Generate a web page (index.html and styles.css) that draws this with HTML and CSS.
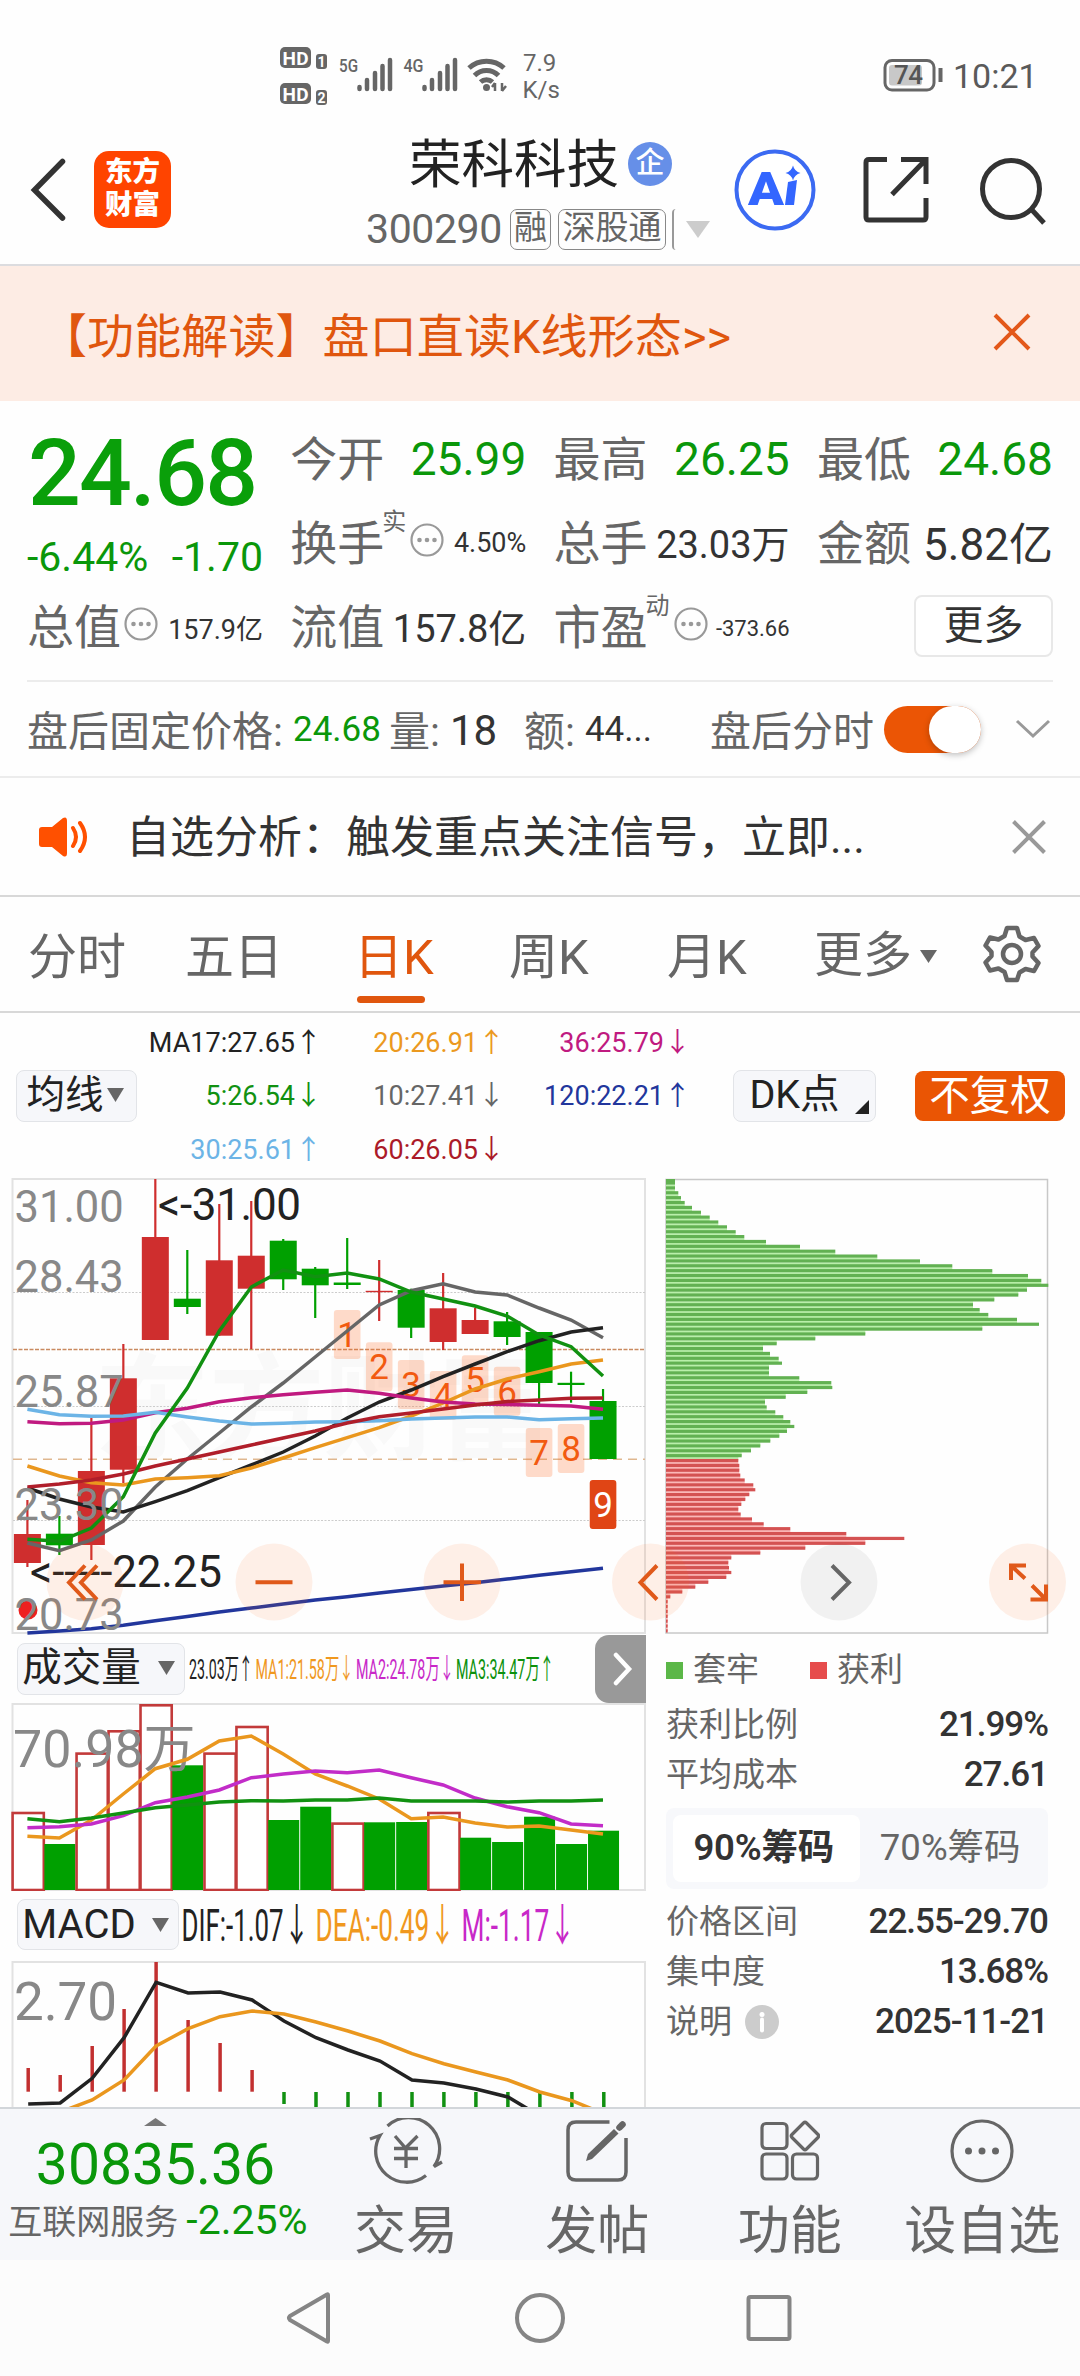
FILE: index.html
```html
<!DOCTYPE html>
<html lang="zh-CN">
<head>
<meta charset="utf-8">
<title>荣科科技 300290</title>
<link rel="stylesheet" href="styles.css">
</head>
<body>
<div class="status">
  <svg width="1080" height="120" viewBox="0 0 1080 120">
    <g fill="#666">
      <rect x="280" y="47" width="31" height="21" rx="5"/><rect x="316" y="54" width="11" height="15" rx="3"/>
      <rect x="280" y="83" width="31" height="21" rx="5"/><rect x="316" y="90" width="11" height="15" rx="3"/>
    </g>
    <g fill="#fff" font-weight="700" font-size="19"><text x="282.500" y="64.500" textLength="26">HD</text><text x="282.500" y="100.500" textLength="26">HD</text></g>
    <g fill="#fff" font-weight="700" font-size="14"><text x="317.500" y="66.500">1</text><text x="317.500" y="102.500">2</text></g>
    <g fill="#666" font-weight="500" font-size="18"><text x="339" y="72" textLength="19" lengthAdjust="spacingAndGlyphs">5G</text><text x="403.500" y="72" textLength="20" lengthAdjust="spacingAndGlyphs">4G</text></g>
    <g stroke="#666" stroke-width="4.500" stroke-linecap="round">
      <path d="M359.500 87v2M367 80v9M375 73v16M382.500 66v23M390 60v29"/>
      <path d="M424.500 87v2M432 80v9M440 73v16M447.500 66v23M455 60v29"/>
    </g>
    <g fill="none" stroke="#666" stroke-width="5">
      <path d="M469 68a26 26 0 0 1 35 0M474.500 75.500a17 17 0 0 1 24 0M480.500 82a9 9 0 0 1 12 0"/>
    </g>
    <circle cx="486.500" cy="87.500" r="3.500" fill="#666"/>
    <path d="M495 91v-8M495 83l-3 4M502 83v8M502 91l4-5" stroke="#666" stroke-width="2.500" fill="none"/>
    <g fill="#666" font-size="24"><text x="523" y="70.500">7.9</text><text x="522.500" y="97.500">K/s</text></g>
    <rect x="885" y="60.500" width="49" height="29.500" rx="7" fill="none" stroke="#666" stroke-width="3"/>
    <rect x="889" y="65" width="33" height="20.500" rx="3" fill="#c8c8c8"/>
    <path d="M940.500 68v14" stroke="#666" stroke-width="4"/>
    <text x="894" y="84" font-size="26" fill="#555" textLength="29" font-weight="500">74</text>
    <text x="953" y="88" font-size="34" fill="#5a5a5a">10:21</text>
  </svg>
</div>

<header class="top">
  <svg class="back" width="40" height="70" viewBox="0 0 40 70"><path d="M34.500 6.500L6.500 35l28 28" fill="none" stroke="#333" stroke-width="5.500" stroke-linecap="round"/></svg>
  <div class="logo"><span>东方</span><span>财富</span></div>
  <div class="stock">
    <div class="name">荣科科技<i>企</i></div>
    <div class="code"><span>300290</span><b>融</b><b class="wide">深股通</b><em></em><svg width="24" height="17" viewBox="0 0 24 17"><path d="M0 0h24L12 17z" fill="#ccc"/></svg></div>
  </div>
  <svg class="ai" width="84" height="84" viewBox="0 0 84 84">
    <circle cx="42" cy="42" r="38.500" fill="#fff" stroke="#3b6af2" stroke-width="4"/>
    <text x="15" y="56.500" font-size="47" font-weight="900" fill="#3366ff" textLength="36" lengthAdjust="spacingAndGlyphs">A</text>
    <path d="M55 34l9-2-3 25h-9z" fill="#3366ff"/>
    <path d="M60 17.500q1.500 6 7.500 7.500-6 1.500-7.500 7.500-1.500-6-7.500-7.500 6-1.500 7.500-7.500z" fill="#3366ff"/>
  </svg>
  <svg class="share" width="66" height="68" viewBox="0 0 66 68" fill="none" stroke="#333" stroke-width="5"><path d="M24 3.500H6q-3 0-3 3v54.500q0 3 3 3h54q3 0 3-3V42M38 3.500h25V28M62 4.500L29 38.500"/></svg>
  <svg class="search" width="70" height="70" viewBox="0 0 70 70" fill="none" stroke="#333" stroke-width="5"><circle cx="32" cy="33" r="28.500"/><path d="M53 54l12 13"/></svg>
</header>

<div class="banner"><span>【功能解读】盘口直读K线形态&gt;&gt;</span><svg width="38" height="38" viewBox="0 0 38 38"><path d="M2 2l34 34M36 2L2 36" stroke="#e3581a" stroke-width="4"/></svg></div>

<section class="quote">
  <div class="price"><strong>24.68</strong><p><span>-6.44%</span><span>-1.70</span></p></div>
  <div class="cell"><label>今开</label><span class="v green">25.99</span></div>
  <div class="cell"><label>最高</label><span class="v green">26.25</span></div>
  <div class="cell"><label>最低</label><span class="v green">24.68</span></div>
  <div class="cell"><label>换手<sup>实</sup></label><svg class="dots" viewBox="0 0 34 34"><use href="#dots"/></svg><span class="v s27">4.50%</span></div>
  <div class="cell"><label>总手</label><span class="v s38">23.03万</span></div>
  <div class="cell"><label>金额</label><span class="v s44">5.82亿</span></div>
  <div class="cell"><label>总值</label><svg class="dots" viewBox="0 0 34 34"><use href="#dots"/></svg><span class="v s27">157.9亿</span></div>
  <div class="cell"><label>流值</label><span class="v s38">157.8亿</span></div>
  <div class="cell"><label>市盈<sup>动</sup></label><svg class="dots" viewBox="0 0 34 34"><use href="#dots"/></svg><span class="v s22">-373.66</span></div>
  <div class="cell end"><button class="more">更多</button></div>
</section>
<svg class="defs" width="0" height="0"><defs><g id="dots"><circle cx="17" cy="17" r="15.500" fill="none" stroke="#999" stroke-width="2.200"/><g fill="#999"><circle cx="9.500" cy="17" r="2.300"/><circle cx="17" cy="17" r="2.300"/><circle cx="24.500" cy="17" r="2.300"/></g></g></defs></svg>

<section class="after">
  <span class="lab fixed">盘后固定价格:</span><span class="num green">24.68</span>
  <span class="lab vol">量:</span><span class="num big">18</span>
  <span class="lab amt">额:</span><span class="num">44...</span>
  <span class="lab time">盘后分时</span><span class="toggle"><i></i></span>
  <svg width="36" height="20" viewBox="0 0 36 20"><path d="M2 2l16 15L34 2" fill="none" stroke="#999" stroke-width="3"/></svg>
</section>

<section class="notice">
  <svg width="52" height="42" viewBox="0 0 52 42"><path d="M4 11h10L25 2q4-2 4 3v32q0 5-4 3l-11-9H4q-3 0-3-3V14q0-3 3-3z" fill="#ff5000"/><path d="M35 12q6 9 0 18M42 7q10 14 0 28" fill="none" stroke="#ff5000" stroke-width="4" stroke-linecap="round"/></svg>
  <p>自选分析：触发重点关注信号，立即...</p>
  <svg width="34" height="34" viewBox="0 0 34 34"><path d="M1.500 1.500l31 31M32.500 1.500l-31 31" stroke="#999" stroke-width="4"/></svg>
</section>

<nav class="tabs">
  <span>分时</span><span>五日</span><span class="on">日K</span><span>周K</span><span>月K</span><span>更多<svg width="17" height="13" viewBox="0 0 17 13"><path d="M0 0h17L8.500 13z" fill="#666"/></svg></span>
  <svg class="gear" width="58" height="58" viewBox="0 0 58 58" fill="none" stroke="#666" stroke-width="4.500" stroke-linejoin="round"><path d="M24 3h10l2.500 8.500 6 3.500 8.500-2 4.500 8-6 6.500v4l6 6.500-4.500 8-8.500-2-6 3.500L34 55H24l-2.500-8-6-3.500-8.500 2-4.500-8 6-6.500v-4l-6-6.500 4.500-8 8.500 2 6-3.500z"/><circle cx="29" cy="29" r="9"/></svg>
</nav>

<section class="legend">
  <button class="chip avg">均线<svg width="17" height="14" viewBox="0 0 17 14"><path d="M0 0h17L8.500 14z" fill="#666"/></svg></button>
  <div class="mas">
    <span class="c17">MA17:27.65↑</span><span class="c20">20:26.91↑</span><span class="c36">36:25.79↓</span>
    <span class="c5">5:26.54↓</span><span class="c10">10:27.41↓</span><span class="c120">120:22.21↑</span>
    <span class="c30">30:25.61↑</span><span class="c60">60:26.05↓</span>
  </div>
  <button class="chip dk">DK点<svg width="14" height="14" viewBox="0 0 14 14"><path d="M14 0v14H0z" fill="#222"/></svg></button>
  <button class="adj">不复权</button>
</section>

<main class="charts">
  <div class="left">
    <svg class="k" width="657" height="456" viewBox="0 1178 657 456">
      <text x="94" y="1450" font-size="116" font-weight="700" fill="#f9f9f9" textLength="460">东方财富</text>
      <rect x="12.500" y="1179" width="632.500" height="454" fill="none" stroke="#e2e2e2" stroke-width="2"/>
      <path d="M13 1292.500h632M13 1406.500h632M13 1520.500h632" stroke="#ccc" stroke-width="1" stroke-dasharray="2 1.500"/>
      <path d="M13 1349.500h632" stroke="#c98a60" stroke-width="1.500" stroke-dasharray="4 1.500"/>
      <path d="M13 1459.300h632" stroke="#dfb78f" stroke-width="1.500" stroke-dasharray="9 6"/>
      <g id="candles"></g>
      <g id="signals"></g>
      <g id="averages" fill="none" stroke-width="3.500"></g>
      <circle cx="28" cy="1610" r="9.500" fill="#ee2020"/>
      <g font-size="43.500" fill="#888"><text x="14.500" y="1221.500">31.00</text><text x="14.500" y="1291.500">28.43</text><text x="14.500" y="1406.500">25.87</text><text x="14.500" y="1519.500">23.30</text><text x="14.500" y="1629.500">20.73</text></g>
      <g font-size="44" fill="#222"><text x="158" y="1219.500" textLength="143">&lt;-31.00</text><text x="30" y="1586.500" textLength="192">&lt;-----22.25</text></g>
    </svg>
    <div class="bar">
      <button class="chip vol">成交量<svg width="17" height="14" viewBox="0 0 17 14"><path d="M0 0h17L8.500 14z" fill="#666"/></svg></button>
      <svg width="400" height="50" viewBox="185 1644 400 50" font-size="28">
        <text x="189" y="1679" textLength="64" lengthAdjust="spacingAndGlyphs" fill="#222">23.03万↑</text>
        <text x="255.500" y="1679" textLength="98" lengthAdjust="spacingAndGlyphs" fill="#f0981e">MA1:21.58万↓</text>
        <text x="356" y="1679" textLength="98" lengthAdjust="spacingAndGlyphs" fill="#c828c8">MA2:24.78万↓</text>
        <text x="456" y="1679" textLength="98" lengthAdjust="spacingAndGlyphs" fill="#0c910c">MA3:34.47万↑</text>
      </svg>
      <div class="handle"><svg width="20" height="34" viewBox="0 0 20 34"><path d="M3 3l13 14L3 31" fill="none" stroke="#fff" stroke-width="4.500" stroke-linecap="round"/></svg></div>
    </div>
    <svg class="v" width="657" height="188" viewBox="0 1703 657 188">
      <rect x="12.500" y="1704" width="632.500" height="186" fill="none" stroke="#e2e2e2" stroke-width="2"/>
      <g id="volumes"></g>
      <text x="13" y="1766.500" font-size="52" fill="#888">70.98万</text>
      <g id="volumeLines" fill="none" stroke-width="3.500"></g>
    </svg>
    <div class="bar second">
      <button class="chip macd">MACD<svg width="17" height="14" viewBox="0 0 17 14"><path d="M0 0h17L8.500 14z" fill="#666"/></svg></button>
      <svg width="400" height="60" viewBox="179 1896 400 60" font-size="44">
        <text x="181.500" y="1942" textLength="128" lengthAdjust="spacingAndGlyphs" fill="#222">DIF:-1.07↓</text>
        <text x="315.500" y="1942" textLength="140" lengthAdjust="spacingAndGlyphs" fill="#f0981e">DEA:-0.49↓</text>
        <text x="461.500" y="1942" textLength="114" lengthAdjust="spacingAndGlyphs" fill="#c828c8">M:-1.17↓</text>
      </svg>
    </div>
    <svg class="m" width="657" height="146" viewBox="0 1961 657 146">
      <path d="M12.500 2110V1962H645V2110" fill="none" stroke="#e2e2e2" stroke-width="2"/>
      <text x="14" y="2020" font-size="53" fill="#888" textLength="103">2.70</text>
      <g id="macd" fill="none" stroke-width="3.500"></g>
    </svg>
  </div>
  <div class="right">
    <svg class="chips" width="392" height="456" viewBox="657 1178 392 456">
      <rect x="666" y="1179.500" width="381.500" height="453.500" fill="none" stroke="#c8c8c8" stroke-width="1.500"/>
      <g id="chipBars"></g>
    </svg>
    <div class="keys"><i class="g"></i><span>套牢</span><i class="r"></i><span>获利</span></div>
    <dl><dt>获利比例</dt><dd>21.99%</dd><dt>平均成本</dt><dd>27.61</dd></dl>
    <div class="seg"><span class="on">90%筹码</span><span>70%筹码</span></div>
    <dl><dt>价格区间</dt><dd>22.55-29.70</dd><dt>集中度</dt><dd>13.68%</dd><dt>说明<svg width="34" height="34" viewBox="0 0 34 34"><circle cx="17" cy="17" r="17" fill="#ccc"/><circle cx="17" cy="9.500" r="2.500" fill="#fff"/><path d="M17 14.500v11" stroke="#fff" stroke-width="4" stroke-linecap="round"/></svg></dt><dd>2025-11-21</dd></dl>
  </div>
  <svg class="float" width="1080" height="80" viewBox="0 1541.500 1080 80" fill="none" stroke="#e0591a" stroke-width="4">
    <g fill="#ff6a20" fill-opacity=".1" stroke="none"><circle cx="85" cy="1581.500" r="38.500"/><circle cx="274" cy="1581.500" r="38.500"/><circle cx="462" cy="1581.500" r="38.500"/><circle cx="650.500" cy="1581.500" r="38.500"/><circle cx="1027.500" cy="1581.500" r="38.500"/></g>
    <circle cx="839" cy="1581.500" r="38.500" fill="#000" fill-opacity=".05" stroke="none"/>
    <path d="M85 1565l-16 17 16 17M97 1565l-16 17 16 17M255.500 1581.800h37M443.500 1581.800h37.500M462 1563v37.500M657 1565l-16.500 17 16.500 17"/>
    <path d="M832 1565l17 17-17 17" stroke="#666"/>
    <path d="M1011 1579.500V1565h15M1012 1566l13 12M1046 1584v15h-15.500M1045 1598l-13-13"/>
  </svg>
</main>

<footer class="dock">
  <div class="index"><svg width="23" height="8" viewBox="0 0 23 8"><path d="M11.500 0L23 8H0z" fill="#777"/></svg><strong>30835.36</strong><p>互联网服务<b>-2.25%</b></p></div>
  <div class="item trade"><svg width="74" height="66" viewBox="0 0 74 66" fill="none" stroke="#666" stroke-width="3.300"><path d="M18.500 8A31 31 0 0 1 65 48.500L73 44M57 57.500A31 31 0 0 1 11 17.500L1 21M26 18l10.500 12L48.500 18M25 30.500h24M25 40.500h24M37 30v20"/></svg><span>交易</span></div>
  <div class="item post"><svg width="64" height="66" viewBox="0 0 64 66" fill="none" stroke="#666" stroke-width="3.500"><path d="M44.500 4H11q-8 0-8 8v42q0 8 8 8h42q8 0 8-8V20"/><path d="M21 43l2-7 26-25 4.500 4.500L27 41z" fill="#666" stroke="none"/><path d="M54.500 9.500l3-3" stroke-width="6.500" stroke-linecap="round"/></svg><span>发帖</span></div>
  <div class="item func"><svg width="60" height="66" viewBox="0 0 60 66" fill="none" stroke="#666" stroke-width="3.200"><rect x="2" y="5.500" width="25" height="25" rx="4"/><rect x="2" y="36" width="25" height="25" rx="4"/><rect x="32.500" y="36" width="25" height="25" rx="4"/><path d="M43.500 5q1.500-1.500 3 0L58 16.500q1.500 1.500 0 3L46.500 31q-1.500 1.500-3 0L32 19.500q-1.500-1.500 0-3z"/></svg><span>功能</span></div>
  <div class="item fav"><svg width="66" height="66" viewBox="0 0 66 66"><circle cx="33" cy="33" r="30" fill="none" stroke="#666" stroke-width="3.200"/><g fill="#666"><circle cx="19.500" cy="33" r="3.500"/><circle cx="33" cy="33" r="3.500"/><circle cx="46.500" cy="33" r="3.500"/></g></svg><span>设自选</span></div>
</footer>
<div class="system">
  <svg width="1080" height="116" viewBox="0 2260 1080 116" fill="none" stroke="#858585" stroke-width="4" stroke-linejoin="round"><path d="M328 2295v46q0 1-1 .5L290 2320q-2-2 0-4l37-21.500q1-.5 1 .5z"/><circle cx="540" cy="2318" r="23"/><rect x="748.500" y="2297" width="41" height="42" rx="2"/></svg>
</div>
<script src="app.js"></script>
</body>
</html>
```
FILE: styles.css
```css
* { box-sizing: border-box; margin: 0; padding: 0; }
body { width: 1080px; height: 2376px; overflow: hidden; background: #fefefe; font-family: Roboto, "Noto Sans CJK SC", sans-serif; color: #333; }
svg { display: block; flex: none; }
svg text { font-family: Roboto, "Noto Sans CJK SC", sans-serif; }
button { font: inherit; border: 0; }
i, em { font-style: normal; }
.green { color: #0a970a; }
.defs { position: absolute; }

.status { height: 120px; }

.top { height: 146px; display: flex; border-bottom: 2px solid #dcdcdf; padding-left: 28px; }
.back { margin-top: 35px; }
.logo { width: 77px; height: 77px; margin: 31px 0 0 26px; border-radius: 15px; background: #ff4400; color: #fff; font-size: 27.500px; font-weight: 900; display: flex; flex-direction: column; align-items: center; justify-content: center; line-height: 33px; padding-bottom: 3px; }
.stock { width: 352px; margin-left: 195px; }
.name { display: flex; align-items: center; height: 60px; margin: 15px 0 0 43px; font-size: 52.500px; line-height: 60px; color: #222; }
.name i { width: 44px; height: 44px; margin: -3px 0 0 9px; border-radius: 50%; background: #668fe8; color: #fff; font-size: 29px; font-weight: 500; line-height: 43px; text-align: center; }
.code { display: flex; align-items: center; height: 44px; margin-top: 12px; font-size: 41px; letter-spacing: -.4px; color: #666; }
.code span { width: 144px; line-height: 44px; padding-left: 0; }
.code b { width: 41px; height: 41px; border: 1.500px solid #888; border-radius: 7px; font-weight: 400; font-size: 33px; letter-spacing: 0; line-height: 36px; text-align: center; display: flex; justify-content: center; }
.code .wide { width: 108px; margin-left: 7px; }
.code em { width: 4px; height: 41px; margin: 0 10px 0 6px; border-left: 2px solid #999; border-radius: 6px 0 0 6px; }
.ai { margin: 28px 0 0 15px; }
.share { margin: 36px 0 0 46px; }
.search { margin: 36px 0 0 50px; }

.banner { height: 135px; background: #fdece4; display: flex; justify-content: space-between; align-items: center; padding: 0 49px 3px 40px; font-size: 47px; color: #e0560e; }
.banner span { letter-spacing: .1px; }

.quote { height: 281px; margin: 0 27px; padding-top: 17px; border-bottom: 2px solid #ececec; display: grid; grid-template-columns: repeat(4, 236px); grid-template-rows: repeat(3, 84px); column-gap: 27.300px; }
.price { grid-row: span 2; color: #0a9f0a; }
.price strong { display: block; margin-top: 9px; font-size: 93px; font-weight: 500; line-height: 94px; letter-spacing: -1.800px; padding-left: 1px; }
.price p { display: flex; justify-content: space-between; margin-top: 12px; font-size: 41px; line-height: 48px; color: #0a970a; }
.cell { display: flex; align-items: center; }
.cell label { font-size: 47px; color: #666; position: relative; white-space: nowrap; width: 94px; margin-top: -10px; }
.cell sup { position: absolute; left: 92px; top: 4px; font-size: 24px; line-height: 26px; }
.cell .v { margin-left: auto; font-size: 46px; color: #333; white-space: nowrap; }
.cell .green { color: #0a970a; margin-top: -2px; }
.cell .s27 { font-size: 27px; margin-top: -2px; }
.cell .s38 { font-size: 38px; margin-top: -5px; }
.cell .s44 { font-size: 44px; margin-top: -6px; }
.cell .s22 { font-size: 22px; }
.dots { width: 34px; height: 34px; margin: -8px 0 0 3px; }
label:has(sup) + .dots { margin-left: 26px; }
.cell.end { justify-content: flex-end; }
.more { width: 139px; height: 62px; border: 2px solid #e8e8e8; border-radius: 8px; background: #fff; font-size: 40px; color: #333; line-height: 54px; margin-top: -5px; }

.after { height: 96px; display: flex; align-items: center; padding-left: 27px; border-bottom: 2px solid #ececec; font-size: 41px; color: #666; white-space: nowrap; }
.after .lab { margin-top: -2px; }
.after .fixed { width: 266px; }
.after .num { font-size: 35px; }
.after .num:not(.green) { color: #333; }
.after .vol { width: 61px; margin-left: 8px; }
.after .num.big { font-size: 42px; width: 74px; margin-top: 2px; }
.after .amt { width: 61px; }
.after .time { margin-left: auto; margin-right: 10px; }
.toggle { width: 97px; height: 47px; border-radius: 24px; background: #eb5505; }
.toggle i { display: block; width: 52px; height: 47px; margin-left: 45px; border-radius: 24px; background: #fff; box-shadow: 0 2px 6px rgba(0,0,0,.25); }
.after > svg { margin: 0 29px 0 34px; }

.notice { height: 119px; display: flex; align-items: center; padding: 0 34px 0 38px; border-bottom: 2px solid #d8d8d8; font-size: 44px; color: #333; }
.notice p { margin: -5px auto 0 36px; }

.tabs { height: 116px; border-bottom: 2px solid #d8d8d8; display: flex; align-items: center; font-size: 49px; color: #666; padding: 0 0 0 28px; line-height: 114px; }
.tabs span { width: 157px; padding-top: 4px; height: 114px; }
.tabs span:nth-child(3) { width: 155px; margin-left: 12px; position: relative; }
.tabs span:nth-child(4) { width: 158px; }
.tabs span:nth-child(5) { width: 147px; }
.tabs span:nth-child(6) { display: flex; align-items: center; width: 169px; gap: 8px; }
.tabs .on { color: #e0560e; }
.tabs .on::after { content: ""; position: absolute; left: 3px; bottom: 8px; width: 68px; height: 7px; border-radius: 4px; background: #e0560e; }
.gear { margin-bottom: 1px; }

.legend { height: 165px; display: flex; align-items: center; padding-left: 16px; }
.chip { display: flex; align-items: center; justify-content: center; height: 52px; border: 1.500px solid #e2e4e8; border-radius: 8px; background: #f6f7fa; color: #222; font-size: 38px; white-space: nowrap; line-height: 45px; padding-bottom: 2px; }
.avg { width: 121px; gap: 3px; padding-right: 3px; font-size: 38.500px; }
.mas { display: grid; grid-template-columns: 185px 183px 186px; grid-template-rows: repeat(3, 53.500px); font-size: 27px; line-height: 53.500px; text-align: right; margin-top: 3px; }
.c17 { color: #222; } .c20 { color: #eb991f; } .c36 { color: #c01a80; } .c5 { color: #119111; } .c10 { color: #666; } .c120 { color: #22369c; } .c30 { color: #6cb4e6; } .c60 { color: #ab1a28; }
.dk { width: 143px; margin-left: 42px; position: relative; padding-right: 20px; font-size: 39.500px; }
.dk svg { position: absolute; right: 6px; bottom: 7px; }
.adj { width: 150px; height: 50px; margin-left: 39px; border-radius: 8px; background: #ea5504; color: #fff; font-size: 40.500px; line-height: 46px; }

.charts { position: relative; height: 929px; display: flex; overflow: hidden; }
.left { width: 657px; }
.k { overflow: visible; }
.bar { height: 69px; width: 646px; display: flex; align-items: center; padding-left: 17px; }
.bar .vol { width: 168px; gap: 17px; font-size: 39.500px; padding-right: 5px; }
.bar .macd { width: 162px; gap: 16px; height: 51px; font-size: 40px; padding: 0 5px 0 0; }
.bar.second { height: 70px; padding-bottom: 3px; }
.handle { width: 51px; height: 68px; margin-left: auto; border-radius: 14px 0 0 14px; background: #999; display: flex; align-items: center; justify-content: center; }
.handle svg { margin-left: 4px; }
.bar > svg { width: auto; flex: 0 1 auto; overflow: visible; }
.keys { display: flex; align-items: center; height: 60px; margin-top: 6px; padding-left: 9px; font-size: 33px; color: #666; line-height: 40px; }
.keys span { margin-top: -1px; }
.keys i { width: 17px; height: 17px; margin-right: 10px; background: #5bb748; }
.keys .r { margin-left: 51px; background: #e64c4c; }
.right dl { display: grid; grid-template-columns: auto auto; justify-content: space-between; grid-auto-rows: 50px; align-items: center; padding-left: 9px; width: 391px; line-height: 46px; }
.right dt { font-size: 33px; color: #666; display: flex; align-items: center; margin-top: -1px; }
.right dt svg { margin: 0 0 0 13px; }
.right dd { font-size: 35px; letter-spacing: -1px; font-weight: 500; text-align: right; }
.seg { width: 382px; height: 81px; margin: 8px 0 8px 9px; padding: 7px; border-radius: 8px; background: #f7f8fb; display: flex; font-size: 36.500px; line-height: 66px; text-align: center; color: #666; }
.seg span { flex: 1; }
.seg .on { background: #fff; border-radius: 8px; color: #333; font-weight: 600; letter-spacing: -.2px; padding-right: 5px; }
.float { position: absolute; left: 0; top: 363.500px; }

.dock { height: 153px; border-top: 2px solid #d2d6da; background: #f6f7fa; display: flex; color: #666; }
.index { width: 311px; display: flex; flex-direction: column; align-items: center; color: #0a970a; padding-top: 9px; }
.index strong { font-size: 57px; font-weight: 400; line-height: 58px; margin-top: 10px; }
.index p { font-size: 34px; line-height: 46px; color: #666; white-space: nowrap; margin: 5px 0 0 5px; }
.index b { font-weight: 400; font-size: 41px; line-height: 40px; color: #0a970a; margin-left: 8px; }
.item { width: 192.500px; display: flex; flex-direction: column; align-items: center; padding-top: 9px; }
.item span { font-size: 52px; line-height: 60px; margin-top: 18px; }
.item svg { height: 66px; }
.trade { width: 190px; }
.system { height: 116px; background: #fcfcfc; }
```
FILE: app.js
```js
const X0 = 27.4, STEP = 31.98;
const RED = '#cf2e2e', GREEN = '#00a000';
const cx = i => X0 + STEP * i;
const put = (id, markup) => { document.getElementById(id).innerHTML = markup; };
const line = (ys, color, from = 0, dx = 0) =>
  `<polyline points="${ys.map((y, i) => `${(cx(i + from) + dx).toFixed(1)},${y}`).join(' ')}" stroke="${color}"/>`;

// [up?, wick top, body top, body bottom, wick bottom]
const candles = [
  [1,1500,1534,1563,1567],[0,1516,1533.7,1545.3,1555],[1,1418,1471,1545,1560],[1,1344,1378.3,1469.7,1483],
  [1,1179,1237,1340,1340],[0,1250,1298.7,1307,1314],[1,1204,1260.3,1335.7,1336],[1,1201,1255.7,1288.7,1349],
  [0,1239,1240.7,1279.3,1290],[0,1267,1268.7,1285.3,1318],[0,1238,1282.5,1285,1289],[1,1260,1290.8,1292.2,1321],
  [0,1288.7,1290,1327.7,1338],[1,1273,1308.3,1342,1350],[1,1307.7,1320,1334,1334],[0,1312,1321.3,1337,1345],
  [0,1332,1332,1383,1404],[0,1371.7,1382.8,1385,1402.7],[0,1389,1401,1459,1459]
];
put('candles', candles.map(([up, h, t, b, l], i) => {
  const c = up ? RED : GREEN, x = cx(i);
  return `<path d="M${x} ${h}V${l}" stroke="${c}" stroke-width="2.2"/><rect x="${x - 13.5}" y="${t}" width="27" height="${b - t}" fill="${c}"/>`;
}).join(''));

const signalTops = [1310,1342.3,1360,1371,1355.3,1366.7,1428,1424,1480];
put('signals', signalTops.map((y, i) => {
  const x = cx(i + 10), last = i === 8;
  return `<rect x="${x - 13.3}" y="${y}" width="26.6" height="49" rx="3" fill="${last ? '#e04515' : '#ff6a20'}" fill-opacity="${last ? 1 : .24}"/>` +
    `<text x="${x}" y="${y + 37}" font-size="35" text-anchor="middle" fill="${last ? '#fff' : '#f25a10'}">${i + 1}</text>`;
}).join(''));

put('averages', [
  [[1633,1631,1628.7,1625.3,1620.7,1616.5,1612,1608,1604,1600,1596.7,1593,1589.5,1586,1582.7,1579,1575.3,1571.7,1568.3],'#22369c'],
  [[1543,1550.7,1540,1521,1487,1459,1433,1407,1383,1357,1331,1305,1290.7,1283.7,1292,1295,1308,1320,1337.7],'#666'],
  [[1488,1499,1507,1512,1501.7,1490.7,1477.7,1465,1452,1436,1418,1402,1390,1376.7,1364,1351.7,1340.7,1332,1327.7],'#222'],
  [[1466,1476,1482.7,1485,1479,1477.7,1475.7,1468,1458,1447.7,1437.7,1427.7,1416,1403,1389,1379,1371.7,1364,1360],'#ea971e'],
  [[1421.7,1423.7,1423.3,1420,1412.7,1408.3,1401.7,1397.7,1394.7,1392.3,1390,1393.3,1398,1402,1404,1404.5,1405.3,1406,1409.3],'#c01a80'],
  [[1409.3,1414.7,1416.3,1416,1412.3,1417,1421,1424,1423.3,1422,1421.7,1420.7,1419,1418,1417,1417,1419.7,1418.7,1418],'#6cb4e6'],
  [[1487,1484,1480,1474,1466,1459,1452,1445,1438,1431,1423,1416.7,1413,1409,1405,1401.5,1400,1398.3,1398],'#b01e2a'],
  [[1539.3,1541.3,1528,1496.7,1433,1388,1331,1287,1270,1276.7,1273,1279,1292,1299,1306,1316,1335,1346.7,1376],'#119111']
].map(([ys, c]) => line(ys, c)).join(''));

const volumes = [[1,1811.7],[0,1844],[1,1752.3],[1,1730],[1,1704],[0,1765.3],[1,1752.3],[1,1725.7],[0,1820],[0,1806.7],
  [1,1822.3],[0,1822.3],[0,1822],[1,1811.7],[0,1837.7],[0,1842],[0,1816.7],[0,1844],[0,1830.7]];
put('volumes', volumes.map(([up, y], i) => {
  const x = cx(i) - 15;
  return up
    ? `<rect x="${x + .2}" y="${y + 1.3}" width="31.2" height="${1888.7 - y}" fill="#fff" stroke="#c23a3a" stroke-width="2.6"/>`
    : `<rect x="${x}" y="${y}" width="31" height="${1890 - y}" fill="${GREEN}"/>`;
}).join(''));
put('volumeLines', [
  [[1836.3,1838,1820,1794,1768.7,1759.3,1741,1736,1754,1774,1786,1799,1818.7,1817,1823,1827,1826,1830,1834],'#ea971e'],
  [[1827.7,1826.7,1824,1815.7,1802.7,1797,1790,1777.7,1774,1771,1772.7,1770,1777.7,1785,1798,1806.7,1812.7,1824,1825.7],'#c22cc8'],
  [[1818.7,1821.7,1818,1813,1807.7,1805,1802,1800.7,1801,1800,1800,1798,1801,1801,1801,1802,1801,1801,1800],'#119111']
].map(([ys, c]) => line(ys, c)).join(''));

const macdTops = [2068,2075,2046,2009,1962,2020,2043,2070];
let bars = '';
for (let i = 0; i < 19; i++) {
  const x = (cx(i) + .8).toFixed(1);
  bars += i < 8
    ? `<path d="M${x} ${macdTops[i]}V2091.7" stroke="#c23030"/>`
    : `<path d="M${x} 2092V${i === 8 ? 2104 : 2110}" stroke="#119111"/>`;
}
put('macd', bars +
  line([2104,2103,2078.3,2037.7,1982.3,1993,1992,2000,2021,2037.7,2050,2061,2080,2083,2089,2097,2116], '#222', 0, .8) +
  line([2112,2100,2080,2046,2028.7,2016.7,2011,2014,2022,2031,2041,2053.7,2063.7,2072,2080,2092,2100.7,2113.7], '#ea971e', 1, .8));

// Cost distribution, one value per price level from top to bottom.
const trapped = [27,27,27,37,45,56,78,105,131,157,183,209,235,300,402,508,634,762,859,979,1086,1126,1147,1083,1057,985,921,941,967,1053,1119,949,598,448,332,291,312,338,348,309,309,400,496,499,424,359,297,302,328,352,373,385,363,340,313,283,255,227];
const profit = [217,220,220,223,236,262,268,250,238,226,217,224,258,293,373,541,715,598,418,283,196,187,189,196,181,127,88,49,13,5,5,5,5,5,5,5];
const all = [...trapped, ...profit];
put('chipBars', all.map((w, i) => {
  const g = i < trapped.length, y = 1178.2 + 4.868 * i, next = Math.min(w, all[i + 1] || 0);
  return `<rect x="666" y="${(y + 1.5).toFixed(2)}" width="${(next / 3).toFixed(1)}" height="3.4" fill="${g ? '#b9efaa' : '#fbb8b8'}"/>` +
    `<rect x="666" y="${Math.max(y - 1.6, 1179).toFixed(2)}" width="${(w / 3).toFixed(1)}" height="3.2" fill="${g ? '#62b152' : '#d45252'}"/>`;
}).join(''));
```
